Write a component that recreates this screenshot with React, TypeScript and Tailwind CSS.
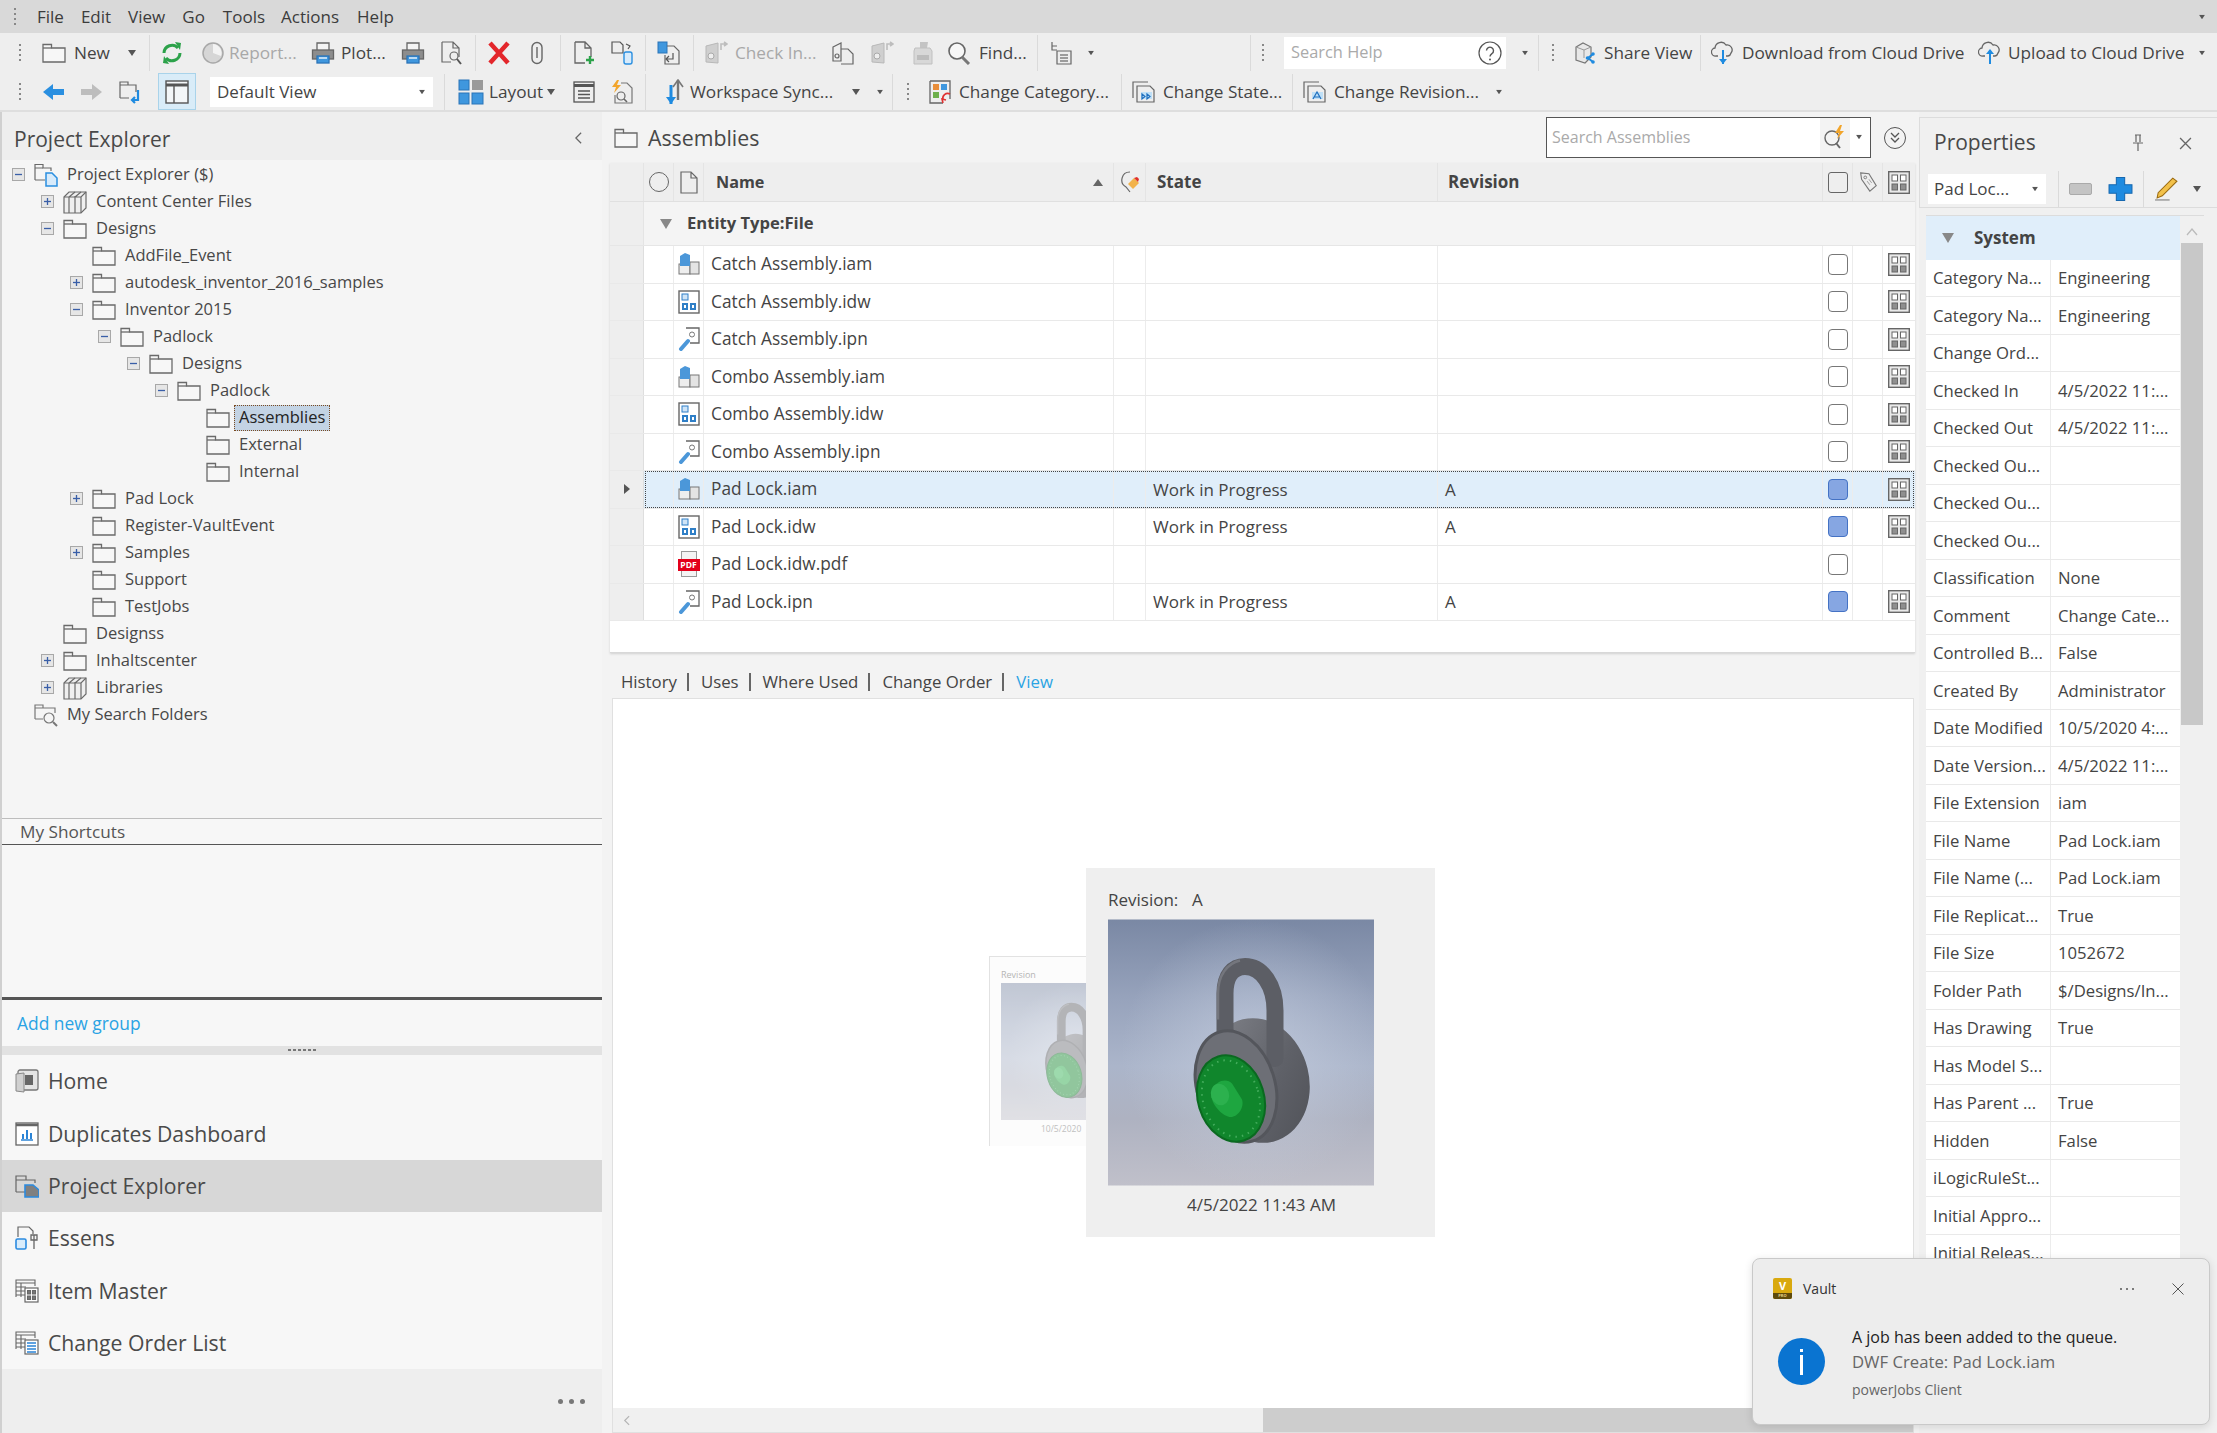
import React from "react";

const FONT = "font-['Open_Sans',sans-serif]";

type IconProps = { className?: string };

function Folder({ className = "w-6 h-[20px]" }: IconProps) {
  return (
    <svg viewBox="0 0 24 20" className={className} fill="none">
      <path d="M1 19V1.5h8.5V5H23v14z" stroke="#6a6a6a" strokeWidth="1.3" fill="#f7f7f7" />
      <path d="M1 5h8.5" stroke="#6a6a6a" strokeWidth="1.3" />
    </svg>
  );
}

function ProjectIcon({ className = "w-6 h-6" }: IconProps) {
  return (
    <svg viewBox="0 0 24 24" className={className} fill="none">
      <path d="M1 17V1.5h8V5h8v3" stroke="#6a6a6a" strokeWidth="1.2" />
      <path d="M1 5h8M1 17h10" stroke="#6a6a6a" strokeWidth="1.2" />
      <path d="M12 10h6l5 5v8H12z" fill="#d8ebfb" stroke="#2a8fe0" strokeWidth="1.5" />
    </svg>
  );
}

function LibraryIcon({ className = "w-6 h-6" }: IconProps) {
  return (
    <svg viewBox="0 0 24 24" className={className} fill="none" stroke="#6a6a6a" strokeWidth="1.2">
      <path d="M1 7l5-5h17v16l-5 5H1z" fill="#efefef" />
      <path d="M6 7v16M12 6v17M18 7v16M1 7h17l5-5M18 2l-6 5M12 2L6 7" />
    </svg>
  );
}

function SearchFolder({ className = "w-6 h-6" }: IconProps) {
  return (
    <svg viewBox="0 0 24 24" className={className} fill="none" stroke="#777" strokeWidth="1.2">
      <path d="M1 16V2h8v3h12v5M1 5h8M1 16h8" />
      <circle cx="15" cy="15" r="5" />
      <path d="M19 19l4 4" strokeWidth="2" />
    </svg>
  );
}

function Expander({ open }: { open: boolean }) {
  return (
    <span className="flex h-[13px] w-[13px] items-center justify-center border border-[#a8a8a8] bg-[#e6e6e6]">
      <svg viewBox="0 0 11 11" className="h-[11px] w-[11px]">
        <path d="M2 5.5h7" stroke="#3a5fa8" strokeWidth="1.3" />
        {!open && <path d="M5.5 2v7" stroke="#3a5fa8" strokeWidth="1.3" />}
      </svg>
    </span>
  );
}

function Caret({ className = "" }: IconProps) {
  return (
    <svg viewBox="0 0 8 6" className={`h-[6px] w-[8px] shrink-0 ${className}`}>
      <path d="M0 0h8L4 6z" fill="#555" />
    </svg>
  );
}

function Grip({ className = "" }: IconProps) {
  return (
    <span className={`flex h-[22px] w-[2px] shrink-0 flex-col justify-between py-[2px] ${className}`}>
      <i className="h-[2px] w-[2px] bg-[#888]" />
      <i className="h-[2px] w-[2px] bg-[#888]" />
      <i className="h-[2px] w-[2px] bg-[#888]" />
      <i className="h-[2px] w-[2px] bg-[#888]" />
    </span>
  );
}

function Sep({ className = "" }: IconProps) {
  return <span className={`h-[36px] w-px shrink-0 bg-[#dadada] ${className}`} />;
}

function Label({ children, className = "" }: { children: React.ReactNode; className?: string }) {
  return <span className={`shrink-0 whitespace-nowrap text-[17.2px] leading-none text-[#444] ${className}`}>{children}</span>;
}

const ico = "h-6 w-6 shrink-0";

function NewFolderIcon({ className = "" }: IconProps) {
  return <Folder className={`h-[22px] w-6 shrink-0 ${className}`} />;
}

function Refresh({ className = "" }: IconProps) {
  return (
    <svg viewBox="0 0 24 24" className={`${ico} ${className}`} fill="none">
      <path d="M4 12a8 8 0 0 1 14-5" stroke="#2ca24a" strokeWidth="3" />
      <path d="M15 1l6 1-1 7z" fill="#2ca24a" />
      <path d="M20 12a8 8 0 0 1-14 5" stroke="#2ca24a" strokeWidth="3" />
      <path d="M9 23l-6-1 1-7z" fill="#2ca24a" />
    </svg>
  );
}

function Clock({ className = "" }: IconProps) {
  return (
    <svg viewBox="0 0 24 24" className={`${ico} ${className}`} fill="none">
      <circle cx="12" cy="12" r="10" fill="#d6d6d6" stroke="#a8a8a8" strokeWidth="1.5" />
      <path d="M12 12V3a9 9 0 0 1 8 12z" fill="#f3f3f3" />
    </svg>
  );
}

function Printer({ className = "" }: IconProps) {
  return (
    <svg viewBox="0 0 24 24" className={`${ico} ${className}`} fill="none" stroke="#666" strokeWidth="1.3">
      <path d="M6 9V2h12v7" fill="#f4f4f4" />
      <rect x="1.5" y="9" width="21" height="9" fill="#8d8d8d" />
      <rect x="6" y="15" width="12" height="7" fill="#3f97de" stroke="#2b74b8" />
      <path d="M8 17h8" stroke="#fff" />
    </svg>
  );
}

function Preview({ className = "" }: IconProps) {
  return (
    <svg viewBox="0 0 24 24" className={`${ico} ${className}`} fill="none" stroke="#666" strokeWidth="1.2">
      <path d="M3 1h11l6 6v9M3 1v20h9M14 1v6h6" />
      <circle cx="15" cy="15" r="4" />
      <path d="M18 18l4 5" strokeWidth="2" stroke="#555" />
    </svg>
  );
}

function RedX({ className = "" }: IconProps) {
  return (
    <svg viewBox="0 0 24 24" className={`${ico} ${className}`} fill="none">
      <path d="M3 2l18 20M21 2L3 22" stroke="#e3262b" strokeWidth="4.5" />
    </svg>
  );
}

function Clip({ className = "" }: IconProps) {
  return (
    <svg viewBox="0 0 24 24" className={`${ico} ${className}`} fill="none" stroke="#666" strokeWidth="1.4">
      <rect x="7" y="1.5" width="10" height="21" rx="5" />
      <path d="M12 6v11" />
    </svg>
  );
}

function NewDoc({ className = "" }: IconProps) {
  return (
    <svg viewBox="0 0 24 24" className={`${ico} ${className}`} fill="none">
      <path d="M3 1h10l6 6v9M3 1v21h10M13 1v6h6" stroke="#666" strokeWidth="1.3" />
      <path d="M18 15v8M14 19h8" stroke="#2ca24a" strokeWidth="2.4" />
    </svg>
  );
}

function DocCyl({ className = "" }: IconProps) {
  return (
    <svg viewBox="0 0 24 24" className={`${ico} ${className}`} fill="none">
      <path d="M2 1h8l3 3v8H2z" stroke="#555" strokeWidth="1.2" />
      <path d="M16 3l4 2-2 3" stroke="#555" strokeWidth="1.2" />
      <rect x="14" y="11" width="8" height="12" rx="2" fill="#d8ebfb" stroke="#2a8fe0" strokeWidth="1.4" />
    </svg>
  );
}

function DocIn({ className = "" }: IconProps) {
  return (
    <svg viewBox="0 0 24 24" className={`${ico} ${className}`} fill="none">
      <rect x="1" y="1" width="9" height="11" fill="#3f97de" stroke="#2b74b8" />
      <path d="M10 5h7l5 5v13H8v-9" stroke="#666" strokeWidth="1.2" />
      <path d="M16 12v6h-6M12 15l-3 3 3 3" stroke="#555" strokeWidth="1.2" />
    </svg>
  );
}

function CheckInIcon({ className = "" }: IconProps) {
  return (
    <svg viewBox="0 0 24 24" className={`${ico} ${className}`} fill="none">
      <path d="M2 5l12-3v20l-12-1z" fill="#cfcfcf" stroke="#b8b8b8" />
      <circle cx="7" cy="15" r="3" fill="#eee" stroke="#aaa" />
      <path d="M17 9V3l6 0M20 1l3 2-3 2" stroke="#bdbdbd" strokeWidth="1.6" />
    </svg>
  );
}

function DocCopy({ className = "" }: IconProps) {
  return (
    <svg viewBox="0 0 24 24" className={`${ico} ${className}`} fill="none" stroke="#666" strokeWidth="1.2">
      <path d="M2 6l8-4v18H2z" />
      <circle cx="6" cy="15" r="2" />
      <path d="M10 8h7l5 5v10H10" />
    </svg>
  );
}

function PdfGray({ className = "" }: IconProps) {
  return (
    <svg viewBox="0 0 24 24" className={`${ico} ${className}`} fill="none">
      <path d="M10 1h8l-1 6h-7z" fill="#c4c4c4" />
      <path d="M5 7h15l2 3v13H4V10z" fill="#d8d8d8" stroke="#c0c0c0" />
      <rect x="7" y="14" width="12" height="5" fill="#bdbdbd" />
    </svg>
  );
}

function Find({ className = "" }: IconProps) {
  return (
    <svg viewBox="0 0 24 24" className={`${ico} ${className}`} fill="none" stroke="#666">
      <circle cx="10" cy="10" r="8" strokeWidth="1.6" fill="#f7f7f7" />
      <path d="M15 16l7 7" strokeWidth="3" stroke="#777" />
    </svg>
  );
}

function TreeList({ className = "" }: IconProps) {
  return (
    <svg viewBox="0 0 24 24" className={`${ico} ${className}`} fill="none" stroke="#666" strokeWidth="1.2">
      <path d="M3 1v8h5M3 5h5" />
      <path d="M8 10h14v13H8z" />
      <path d="M11 14h8M11 17h8M11 20h8" stroke="#4a4a4a" />
    </svg>
  );
}

function CloudIcon({ down, className = "" }: { down: boolean; className?: string }) {
  return (
    <svg viewBox="0 0 24 24" className={`${ico} ${className}`} fill="none">
      <path d="M7 15H5a4 4 0 0 1-1-8 6 6 0 0 1 11-3 5 5 0 0 1 5 8 4 4 0 0 1-3 3h-2" stroke="#666" strokeWidth="1.3" />
      <path d="M12 9v14" stroke="#1f8be0" strokeWidth="2" />
      {down ? <path d="M8 18l4 5 4-5z" fill="#1f8be0" /> : <path d="M8 13l4-5 4 5z" fill="#1f8be0" />}
    </svg>
  );
}

function ShareIcon({ className = "" }: IconProps) {
  return (
    <svg viewBox="0 0 24 24" className={`${ico} ${className}`} fill="none">
      <path d="M4 6l7-4 8 4v10l-6 6-9-3z" fill="#e8e8e8" stroke="#777" strokeWidth="1.2" />
      <path d="M4 6l8 3 7-3M12 9v8" stroke="#999" />
      <path d="M21 13l-5 4 5 4" stroke="#1f8be0" strokeWidth="2" />
      <circle cx="21" cy="13" r="1.8" fill="#1f8be0" />
      <circle cx="21" cy="21" r="1.8" fill="#1f8be0" />
      <circle cx="15.5" cy="17" r="1.8" fill="#1f8be0" />
    </svg>
  );
}

function Arrow({ left, color, className = "" }: { left: boolean; color: string; className?: string }) {
  return (
    <svg viewBox="0 0 24 24" className={`${ico} ${className}`}>
      <path d={left ? "M1 12l10-8v5h11v6H11v5z" : "M23 12L13 4v5H2v6h11v5z"} fill={color} />
    </svg>
  );
}

function DocArrow({ className = "" }: IconProps) {
  return (
    <svg viewBox="0 0 24 24" className={`${ico} ${className}`} fill="none">
      <path d="M2 18V2h8v3h8v7M2 5h8M2 18h9" stroke="#666" strokeWidth="1.2" />
      <path d="M20 10v10h-6M17 17l-3 3 3 3" stroke="#1f8be0" strokeWidth="2.2" />
    </svg>
  );
}

function PaneToggle() {
  return (
    <span className="ml-[16px] flex h-[37px] w-[38px] shrink-0 items-center justify-center border border-[#a9d3ea] bg-[#d9ecf8]">
      <svg viewBox="0 0 24 24" className="h-[26px] w-[24px]" fill="none" stroke="#555" strokeWidth="1.4">
        <rect x="1" y="1" width="22" height="22" fill="#f3f6f8" />
        <path d="M1 5h22" strokeWidth="3" />
        <path d="M9 5v18" />
      </svg>
    </span>
  );
}

function LayoutIcon({ className = "" }: IconProps) {
  return (
    <svg viewBox="0 0 26 26" className={`h-[26px] w-[26px] shrink-0 ${className}`} fill="#3f97de">
      <rect x="1" y="1" width="10" height="10" stroke="#2b74b8" />
      <rect x="14" y="1" width="11" height="10" fill="#9a9a9a" />
      <rect x="1" y="14" width="10" height="11" stroke="#2b74b8" />
      <rect x="14" y="14" width="11" height="11" stroke="#2b74b8" />
    </svg>
  );
}

function ListBox({ className = "" }: IconProps) {
  return (
    <svg viewBox="0 0 24 24" className={`${ico} ${className}`} fill="none" stroke="#555" strokeWidth="1.3">
      <rect x="2" y="2" width="20" height="20" />
      <path d="M2 5.5h20" strokeWidth="3" />
      <path d="M6 11h12M6 14.5h12M6 18h12" />
    </svg>
  );
}

function BoltDoc({ className = "" }: IconProps) {
  return (
    <svg viewBox="0 0 24 24" className={`${ico} ${className}`} fill="none">
      <path d="M11 3h6l5 5v15H5v-8" stroke="#777" strokeWidth="1.2" />
      <circle cx="11" cy="16" r="4" stroke="#666" strokeWidth="1.2" />
      <path d="M14 19l3 3" stroke="#666" strokeWidth="1.6" />
      <path d="M7 0L2 7h4l-2 6 7-8H7l2-5z" fill="#f2a52b" />
    </svg>
  );
}

function WsSync({ className = "" }: IconProps) {
  return (
    <svg viewBox="0 0 22 26" className={`h-[26px] w-[22px] shrink-0 ${className}`} fill="none">
      <path d="M8 6v19" stroke="#1f8be0" strokeWidth="3" />
      <path d="M3 18l5 7 5-7z" fill="#1f8be0" />
      <path d="M15 1v20" stroke="#777" strokeWidth="2.4" />
      <path d="M10 8l5-7 5 7" stroke="#777" strokeWidth="1.6" />
    </svg>
  );
}

function CatIcon({ className = "" }: IconProps) {
  return (
    <svg viewBox="0 0 24 24" className={`${ico} ${className}`} fill="none">
      <path d="M2 1h20v18M2 1v22h13" stroke="#666" strokeWidth="1.3" />
      <rect x="5" y="4" width="6" height="6" fill="#e88d3a" />
      <rect x="13" y="4" width="6" height="6" fill="#3f97de" />
      <rect x="5" y="12" width="6" height="6" fill="#6eb04c" />
      <path d="M22 14a5 5 0 0 0-7 6M15 23l-1-4 4 1" stroke="#e03030" strokeWidth="1.6" />
    </svg>
  );
}

function StateChange({ letter, className = "" }: { letter: string; className?: string }) {
  return (
    <svg viewBox="0 0 24 24" className={`${ico} ${className}`} fill="none">
      <path d="M1 18V2h15M5 22V6h13l4 4v12z" stroke="#666" strokeWidth="1.2" />
      <rect x="9" y="12" width="11" height="7" fill="#bfe0f7" />
      <path d={letter === "A" ? "M10 19l4-7 4 7M11.5 17h5" : "M10 14l3 2.5L10 19zM15 14l3 2.5-3 2.5z"} stroke="#1f6fbe" strokeWidth="1.2" />
    </svg>
  );
}

function AssemblyIcon() {
  return (
    <svg viewBox="0 0 22 22" className="h-[22px] w-[22px] shrink-0">
      <rect x="1" y="11" width="11" height="10" fill="#eee" stroke="#777" />
      <rect x="12" y="9" width="9" height="12" fill="#e4e4e4" stroke="#777" />
      <path d="M2 13V3l5-3 5 2v11z" fill="#4b97d9" />
    </svg>
  );
}

function DrawingIcon() {
  return (
    <svg viewBox="0 0 22 24" className="h-[24px] w-[22px] shrink-0">
      <rect x="1" y="1" width="20" height="22" fill="#fff" stroke="#666" strokeWidth="1.4" />
      <rect x="4" y="4" width="6" height="6" fill="#cfe4f7" stroke="#2f7fc7" />
      <rect x="4" y="13" width="6" height="7" fill="#2f7fc7" />
      <rect x="12" y="13" width="6" height="7" fill="#2f7fc7" />
      <path d="M6 15h2v3H6zM14 15h2v3h-2z" fill="#fff" />
    </svg>
  );
}

function PresentationIcon() {
  return (
    <svg viewBox="0 0 22 24" className="h-[24px] w-[22px] shrink-0" fill="none">
      <path d="M8 1h13v15H12" stroke="#666" strokeWidth="1.3" fill="#fff" />
      <circle cx="14" cy="7.5" r="2.5" stroke="#777" />
      <path d="M10 14L3 22" stroke="#4b97d9" strokeWidth="4" strokeLinecap="round" />
    </svg>
  );
}

function PdfIcon() {
  return (
    <span className="relative flex h-[26px] w-[22px] shrink-0 justify-center">
      <span className="h-[26px] w-[16px] border border-[#999] bg-[#f4f4f4]" />
      <span className="absolute top-[8px] left-0 h-[12px] w-[22px] bg-[#e3001b] text-center text-[8.5px] leading-[12px] font-bold text-white">PDF</span>
    </span>
  );
}

function GridIcon() {
  return (
    <svg viewBox="0 0 22 23" className="h-[23px] w-[22px]" fill="none">
      <rect x=".7" y=".7" width="20.6" height="21.6" fill="#e9e9e9" stroke="#666" strokeWidth="1.4" />
      <rect x="4" y="4" width="5.5" height="6" fill="#fff" stroke="#666" />
      <rect x="12.5" y="4" width="5.5" height="6" fill="#fff" stroke="#666" />
      <rect x="4" y="13" width="5.5" height="6" fill="#8f8f8f" stroke="#666" />
      <rect x="12.5" y="13" width="5.5" height="6" fill="#8f8f8f" stroke="#666" />
    </svg>
  );
}

function Padlock() {
  return (
    <svg viewBox="0 0 266 266" className="block h-full w-full">
      <defs>
        <linearGradient id="lockBg" x1="0" y1="0" x2="0" y2="1">
          <stop offset="0" stopColor="#7a88a4" />
          <stop offset=".3" stopColor="#97a3bc" />
          <stop offset=".55" stopColor="#abb5ca" />
          <stop offset=".75" stopColor="#aeb2c1" />
          <stop offset="1" stopColor="#c0c0ca" />
        </linearGradient>
        <radialGradient id="lockGlow" cx=".55" cy=".5" r=".5">
          <stop offset="0" stopColor="#c6cfe0" stopOpacity=".7" />
          <stop offset="1" stopColor="#c6cfe0" stopOpacity="0" />
        </radialGradient>
        <linearGradient id="lockBody" x1="0" y1="0" x2="1" y2="1">
          <stop offset="0" stopColor="#85878e" />
          <stop offset=".6" stopColor="#5f6168" />
          <stop offset="1" stopColor="#4f5157" />
        </linearGradient>
      </defs>
      <rect width="266" height="266" fill="url(#lockBg)" />
      <rect width="266" height="266" fill="url(#lockGlow)" />
      <ellipse cx="150" cy="161" rx="51" ry="63" transform="rotate(-14 150 161)" fill="url(#lockBody)" />
      <path d="M117 112V74c0-18 8-27 20-27 17 0 30 19 30 44v48" fill="none" stroke="#5c5e65" strokeWidth="17" strokeLinecap="round" />
      <path d="M110 100V74c0-18 9-30 22-33" fill="none" stroke="#74767d" strokeWidth="2.5" />
      <ellipse cx="128" cy="167" rx="39" ry="57" transform="rotate(-17 128 167)" fill="#6d6f76" stroke="#54565c" strokeWidth="3" />
      <ellipse cx="123" cy="179" rx="33" ry="44" transform="rotate(-17 123 179)" fill="#10862c" stroke="#0a6a20" strokeWidth="2" />
      <ellipse cx="123" cy="179" rx="28" ry="39" transform="rotate(-17 123 179)" fill="none" stroke="#5fc077" strokeOpacity=".65" strokeWidth="2" strokeDasharray="1.5 5" />
      <path d="M104 170c4-9 15-12 20-6l10 16c3 9-6 20-14 17-9-3-20-17-16-27z" fill="#1ea640" />
      <ellipse cx="112" cy="175" rx="9" ry="11" transform="rotate(-17 112 175)" fill="#2cb14e" />
    </svg>
  );
}

const indent: Record<number, string> = {
  0: "pl-[10px]",
  1: "pl-[39px]",
  2: "pl-[68px]",
  3: "pl-[96px]",
  4: "pl-[125px]",
  5: "pl-[153px]",
  6: "pl-[182px]",
};

type TreeNode = { d: number; t: string; e?: "open" | "closed"; i?: "project" | "lib" | "search"; sel?: boolean };

const tree: TreeNode[] = [
  { d: 0, t: "Project Explorer ($)", e: "open", i: "project" },
  { d: 1, t: "Content Center Files", e: "closed", i: "lib" },
  { d: 1, t: "Designs", e: "open" },
  { d: 2, t: "AddFile_Event" },
  { d: 2, t: "autodesk_inventor_2016_samples", e: "closed" },
  { d: 2, t: "Inventor 2015", e: "open" },
  { d: 3, t: "Padlock", e: "open" },
  { d: 4, t: "Designs", e: "open" },
  { d: 5, t: "Padlock", e: "open" },
  { d: 6, t: "Assemblies", sel: true },
  { d: 6, t: "External" },
  { d: 6, t: "Internal" },
  { d: 2, t: "Pad Lock", e: "closed" },
  { d: 2, t: "Register-VaultEvent" },
  { d: 2, t: "Samples", e: "closed" },
  { d: 2, t: "Support" },
  { d: 2, t: "TestJobs" },
  { d: 1, t: "Designss" },
  { d: 1, t: "Inhaltscenter", e: "closed" },
  { d: 1, t: "Libraries", e: "closed", i: "lib" },
  { d: 0, t: "My Search Folders", i: "search" },
];

function TreeRow({ node }: { node: TreeNode }) {
  return (
    <div className={`flex h-[27px] items-center ${indent[node.d]}`}>
      <span className="flex w-[13px] shrink-0 justify-center">
        {node.e && <Expander open={node.e === "open"} />}
      </span>
      <span className="ml-[9px] flex w-6 shrink-0 justify-center">
        {node.i === "project" ? <ProjectIcon /> : node.i === "lib" ? <LibraryIcon /> : node.i === "search" ? <SearchFolder /> : <Folder />}
      </span>
      {node.sel ? (
        <span className="ml-[4px] flex h-[26px] items-center border border-dotted border-[#7a4a20] bg-[#c3d3e4] px-[4px] text-[16.5px] text-[#222]">{node.t}</span>
      ) : (
        <span className="ml-[9px] whitespace-nowrap text-[16.5px] text-[#484848]">{node.t}</span>
      )}
    </div>
  );
}

function HomeIcon() {
  return (
    <svg viewBox="0 0 24 24" className={ico} fill="none">
      <rect x="3" y="1" width="20" height="20" rx="2" fill="#e4e4e4" stroke="#777" strokeWidth="1.3" />
      <path d="M1 5l8-1v19l-8-1z" fill="#d0d0d0" stroke="#888" />
      <rect x="10" y="6" width="8" height="10" fill="#666" />
    </svg>
  );
}

function DashIcon() {
  return (
    <svg viewBox="0 0 24 24" className={ico} fill="none">
      <rect x="1" y="1" width="22" height="22" stroke="#666" strokeWidth="1.3" fill="#fff" />
      <path d="M1 3h22" stroke="#666" strokeWidth="2.5" />
      <path d="M6 18h12" stroke="#2b84d6" strokeWidth="1.5" />
      <path d="M7 12v5h2v-5zM11 8v9h2V8zM15 11v6h2v-6z" fill="#2b84d6" />
    </svg>
  );
}

function NavProject() {
  return (
    <svg viewBox="0 0 24 24" className={ico} fill="none">
      <path d="M1 18V2h10v4h9v3M1 6h10M1 18h9" stroke="#666" strokeWidth="1.2" />
      <path d="M10 11h8l6 5v7H10z" fill="#808080" stroke="#2b8be0" strokeWidth="1.6" />
    </svg>
  );
}

function NavEssens() {
  return (
    <svg viewBox="0 0 24 24" className={ico} fill="none">
      <path d="M3 11V1h11l4 4v3" stroke="#666" strokeWidth="1.2" />
      <rect x="1" y="13" width="10" height="10" rx="1.5" fill="#d9ecfb" stroke="#2b8be0" strokeWidth="1.6" />
      <path d="M19 9v14M16 9h6v5h-6z" stroke="#666" strokeWidth="1.3" />
    </svg>
  );
}

function NavGrid({ blue }: { blue: boolean }) {
  return (
    <svg viewBox="0 0 24 24" className={ico} fill="none" stroke="#666" strokeWidth="1.1">
      <path d="M1 18V1h19v6M1 4h19M1 8h10M1 12h9M1 16h9M6 4v14" />
      <rect x="10" y="9" width="13" height="14" fill="#fff" strokeWidth="1.2" />
      {blue ? (
        <path d="M12 12h9M12 15h9M12 18h9M12 21h9" stroke="#2b84d6" strokeWidth="1.5" />
      ) : (
        <path d="M12.5 11.5h3V15h-3zM17.5 11.5h3V15h-3zM12.5 17h3v3.5h-3zM17.5 17h3v3.5h-3z" fill="#777" />
      )}
    </svg>
  );
}

function NavItem({ icon, label, active }: { icon: React.ReactNode; label: string; active?: boolean }) {
  return (
    <div className={`flex h-[52.4px] items-center pl-[13px] ${active ? "bg-[#d7d7d7]" : ""}`}>
      {icon}
      <span className="ml-[9px] text-[21.2px] text-[#4a4a4a]">{label}</span>
    </div>
  );
}

function LeftPanel() {
  return (
    <div className="flex h-full w-[602px] shrink-0 flex-col border-l-2 border-[#d0d0d0] bg-[#f7f7f7]">
      <div className="flex h-[48px] shrink-0 items-center justify-between bg-[#eeeeee] pt-[7px] pr-[19px] pl-[12px]">
        <span className="text-[21px] text-[#484848]">Project Explorer</span>
        <svg viewBox="0 0 10 16" className="mb-[4px] h-[14px] w-[9px]" fill="none">
          <path d="M8 2L2 8l6 6" stroke="#666" strokeWidth="1.4" />
        </svg>
      </div>
      <div className="h-[658px] shrink-0 overflow-hidden bg-[#f5f5f5] pt-[1px]">
        {tree.map((n, i) => (
          <TreeRow key={i} node={n} />
        ))}
      </div>
      <div className="flex h-[27px] shrink-0 items-center border-t border-b border-t-[#bdbdbd] border-b-[#555] pl-[18px] text-[17.2px] text-[#555]">My Shortcuts</div>
      <div className="h-[152px] shrink-0" />
      <div className="h-[3px] shrink-0 bg-[#555]" />
      <div className="flex h-[45.5px] shrink-0 items-center pl-[15px] text-[17.4px] text-[#2aa3e4]">Add new group</div>
      <div className="flex h-[9.5px] shrink-0 items-center justify-center gap-[2px] bg-[#e2e2e2]">
        <i className="h-[2px] w-[3px] bg-[#777]" />
        <i className="h-[2px] w-[3px] bg-[#777]" />
        <i className="h-[2px] w-[3px] bg-[#777]" />
        <i className="h-[2px] w-[3px] bg-[#777]" />
        <i className="h-[2px] w-[3px] bg-[#777]" />
        <i className="h-[2px] w-[3px] bg-[#777]" />
      </div>
      <NavItem icon={<HomeIcon />} label="Home" />
      <NavItem icon={<DashIcon />} label="Duplicates Dashboard" />
      <NavItem icon={<NavProject />} label="Project Explorer" active />
      <NavItem icon={<NavEssens />} label="Essens" />
      <NavItem icon={<NavGrid blue={false} />} label="Item Master" />
      <NavItem icon={<NavGrid blue />} label="Change Order List" />
      <div className="flex flex-1 items-center justify-end gap-[6px] bg-[#eeeeee] pr-[17px]">
        <i className="h-[5px] w-[5px] rounded-full bg-[#777]" />
        <i className="h-[5px] w-[5px] rounded-full bg-[#777]" />
        <i className="h-[5px] w-[5px] rounded-full bg-[#777]" />
      </div>
    </div>
  );
}

const gridCols = "grid-cols-[34px_30px_30px_410px_32px_292px_385px_30px_30px_32px]";
const cell = "flex h-full items-center border-r border-[#ececec]";

type FileRow = { name: string; kind: "iam" | "idw" | "ipn" | "pdf"; wip?: boolean; sel?: boolean };

const files: FileRow[] = [
  { name: "Catch Assembly.iam", kind: "iam" },
  { name: "Catch Assembly.idw", kind: "idw" },
  { name: "Catch Assembly.ipn", kind: "ipn" },
  { name: "Combo Assembly.iam", kind: "iam" },
  { name: "Combo Assembly.idw", kind: "idw" },
  { name: "Combo Assembly.ipn", kind: "ipn" },
  { name: "Pad Lock.iam", kind: "iam", wip: true, sel: true },
  { name: "Pad Lock.idw", kind: "idw", wip: true },
  { name: "Pad Lock.idw.pdf", kind: "pdf" },
  { name: "Pad Lock.ipn", kind: "ipn", wip: true },
];

function FileIcon({ kind }: { kind: FileRow["kind"] }) {
  if (kind === "iam") return <AssemblyIcon />;
  if (kind === "idw") return <DrawingIcon />;
  if (kind === "ipn") return <PresentationIcon />;
  return <PdfIcon />;
}

function FileRowView({ row }: { row: FileRow }) {
  const bg = row.sel ? "bg-[#e0eefa]" : "bg-white";
  return (
    <div className={`relative grid h-[37.5px] ${gridCols} border-b border-[#e9e9e9] text-[17px] text-[#444]`}>
      <div className="flex h-full items-center justify-center border-r border-[#dedede] bg-[#eeeeee]">
        {row.sel && (
          <svg viewBox="0 0 6 10" className="h-[10px] w-[6px]">
            <path d="M0 0l6 5-6 5z" fill="#555" />
          </svg>
        )}
      </div>
      <div className={`${cell} ${bg}`} />
      <div className={`${cell} ${bg} justify-center`}>
        <FileIcon kind={row.kind} />
      </div>
      <div className={`${cell} ${bg} pl-[7px] text-[17.3px]`}>{row.name}</div>
      <div className={`${cell} ${bg}`} />
      <div className={`${cell} ${bg} pl-[7px]`}>{row.wip ? "Work in Progress" : ""}</div>
      <div className={`${cell} ${bg} pl-[7px]`}>{row.wip ? "A" : ""}</div>
      <div className={`${cell} ${bg} justify-center`}>
        <span className={`h-[21px] w-[20px] rounded-[4px] border ${row.wip ? "border-[#4472c4] bg-[#86a6e2]" : "border-[#777] bg-white"}`} />
      </div>
      <div className={`${cell} ${bg}`} />
      <div className={`${cell} ${bg} justify-center border-r-0`}>{row.kind !== "pdf" && <GridIcon />}</div>
      {row.sel && <span className="pointer-events-none absolute inset-y-0 right-[1px] left-[35px] border border-dotted border-[#444]" />}
    </div>
  );
}

function FileGrid() {
  return (
    <div className="ml-[8px] flex h-[490px] w-[1305px] shrink-0 flex-col border-b border-[#d8d8d8] bg-white shadow-[0_1px_2px_#d0d0d0]">
      <div className={`grid h-[39px] shrink-0 ${gridCols} border-b border-[#e0e0e0] bg-[#eeeeee] text-[17px] font-bold text-[#444]`}>
        <div className="h-full border-r border-[#e4e4e4]" />
        <div className="flex h-full items-center justify-center border-r border-[#e4e4e4]">
          <span className="h-[20px] w-[20px] rounded-full border border-[#666]" />
        </div>
        <div className="flex h-full items-center justify-center border-r border-[#e4e4e4]">
          <svg viewBox="0 0 18 23" className="h-[23px] w-[18px]" fill="none">
            <path d="M1 1h10l6 6v15H1zM11 1v6h6" stroke="#666" strokeWidth="1.2" />
          </svg>
        </div>
        <div className="flex h-full items-center justify-between border-r border-[#e4e4e4] pr-[10px] pl-[12px] text-[16.2px]">
          <span>Name</span>
          <svg viewBox="0 0 10 7" className="h-[7px] w-[10px]">
            <path d="M0 7l5-7 5 7z" fill="#666" />
          </svg>
        </div>
        <div className="flex h-full items-center justify-center border-r border-[#e4e4e4]">
          <svg viewBox="0 0 20 24" className="h-[24px] w-[20px]" fill="none">
            <path d="M10 2a8 8 0 0 0-4 15l4 5" stroke="#666" strokeWidth="1.2" />
            <path d="M8 14l6-6 5 5-6 6z" fill="#f2b24a" />
            <path d="M14 8l3-1 2 2-1 3z" fill="#e0302a" />
          </svg>
        </div>
        <div className="flex h-full items-center border-r border-[#e4e4e4] pl-[11px]">State</div>
        <div className="flex h-full items-center border-r border-[#e4e4e4] pl-[10px]">Revision</div>
        <div className="flex h-full items-center justify-center border-r border-[#e4e4e4]">
          <span className="h-[21px] w-[20px] rounded-[3px] border border-[#666]" />
        </div>
        <div className="flex h-full items-center justify-center border-r border-[#e4e4e4]">
          <svg viewBox="0 0 20 24" className="h-[22px] w-[20px]" fill="none">
            <path d="M2 2l9 1 8 13-7 6L3 9z" stroke="#777" strokeWidth="1.2" />
            <circle cx="7" cy="7" r="1.5" stroke="#777" />
            <path d="M9 11l3 4M11 9l3 4" stroke="#999" />
          </svg>
        </div>
        <div className="flex h-full items-center justify-center">
          <GridIcon />
        </div>
      </div>
      <div className="flex h-[44px] shrink-0 border-b border-[#e6e6e6] bg-[#f4f4f4]">
        <div className="w-[34px] border-r border-[#e4e4e4] bg-[#eeeeee]" />
        <div className="flex items-center pl-[16px] text-[16.6px] font-bold text-[#444]">
          <svg viewBox="0 0 12 10" className="mr-[15px] h-[10px] w-[12px]">
            <path d="M0 0h12L6 10z" fill="#888" />
          </svg>
          Entity Type:File
        </div>
      </div>
      {files.map((f) => (
        <FileRowView key={f.name} row={f} />
      ))}
    </div>
  );
}

function PreviewCards() {
  return (
    <div className="flex flex-1 items-start overflow-hidden pt-[169px] pl-[376px]">
      <div className="mt-[88px] flex h-[190px] w-[97px] shrink-0 flex-col overflow-hidden border-t border-l border-[#e2e2e2] bg-[#fcfcfc] pl-[11px]">
        <span className="mt-[9px] h-[17px] text-[9px] leading-[17px] text-[#b5b5b5]">Revision</span>
        <div className="h-[137px] w-[137px] shrink-0 opacity-45">
          <Padlock />
        </div>
        <span className="mt-[3px] pl-[40px] text-[8.5px] whitespace-nowrap text-[#c0c0c0]">10/5/2020</span>
      </div>
      <div className="flex h-[369px] w-[349px] shrink-0 flex-col bg-[#efefef] pl-[22px]">
        <div className="flex h-[51px] shrink-0 items-end pb-[11px] text-[17px] leading-none text-[#444]">
          <span className="w-[84px]">Revision:</span>
          <span>A</span>
        </div>
        <div className="h-[267px] w-[266px] shrink-0">
          <Padlock />
        </div>
        <div className="mt-[10px] pl-[79px] text-[17px] leading-none whitespace-nowrap text-[#444]">4/5/2022 11:43 AM</div>
      </div>
    </div>
  );
}

const tabs = ["History", "Uses", "Where Used", "Change Order"];

function MainPanel() {
  return (
    <div className="flex h-full w-[1317px] shrink-0 flex-col bg-[#f3f3f3]">
      <div className="flex h-[51px] shrink-0 items-center pl-[12px]">
        <Folder className="h-[22px] w-6" />
        <span className="ml-[10px] text-[21.3px] text-[#484848]">Assemblies</span>
        <div className="mt-[-1px] ml-auto flex h-[41px] w-[325px] items-center border border-[#555] bg-white pl-[5px]">
          <span className="text-[16px] text-[#aaa]">Search Assemblies</span>
          <span className="mr-[4px] ml-auto flex h-full w-[30px] items-center justify-center bg-[#f3f3f3]">
            <svg viewBox="0 0 24 24" className="h-[26px] w-[24px]" fill="none">
              <circle cx="9" cy="13" r="7" stroke="#666" strokeWidth="1.4" />
              <path d="M13 18l4 5" stroke="#666" strokeWidth="2" />
              <path d="M17 0l-5 8h4l-2 6 7-8h-4l2-6z" fill="#f2a52b" />
            </svg>
          </span>
          <Caret className="mr-[7px] ml-[1px] scale-75" />
        </div>
        <span className="mr-[13px] ml-[13px] flex h-[22px] w-[22px] items-center justify-center rounded-full border border-[#555]">
          <svg viewBox="0 0 12 12" className="h-[12px] w-[12px]" fill="none">
            <path d="M2 1l4 4 4-4M2 6l4 4 4-4" stroke="#555" strokeWidth="1.3" />
          </svg>
        </span>
      </div>
      <FileGrid />
      <div className="flex h-[45px] shrink-0 items-center pt-[13px] pl-[19px] text-[16.8px] text-[#444]">
        {tabs.map((t) => (
          <span key={t} className="mr-[12px] flex items-center">
            {t}
            <i className="ml-[10px] h-[18px] w-[2px] bg-[#666]" />
          </span>
        ))}
        <span className="text-[#2aa3e4]">View</span>
      </div>
      <div className="ml-[10px] flex min-h-0 w-[1302px] flex-1 flex-col border border-[#e0e0e0] bg-white">
        <PreviewCards />
        <div className="flex h-[24px] shrink-0 items-center bg-[#f0f0f0]">
          <svg viewBox="0 0 8 12" className="ml-[10px] h-[11px] w-[7px]" fill="none">
            <path d="M7 1L2 6l5 5" stroke="#b5b5b5" strokeWidth="1.4" />
          </svg>
          <div className="ml-[633px] h-full flex-1 bg-[#cdcdcd]" />
        </div>
      </div>
    </div>
  );
}

const props: [string, string][] = [
  ["Category Na...", "Engineering"],
  ["Category Na...", "Engineering"],
  ["Change Ord...", ""],
  ["Checked In", "4/5/2022 11:..."],
  ["Checked Out", "4/5/2022 11:..."],
  ["Checked Ou...", ""],
  ["Checked Ou...", ""],
  ["Checked Ou...", ""],
  ["Classification", "None"],
  ["Comment", "Change Cate..."],
  ["Controlled B...", "False"],
  ["Created By", "Administrator"],
  ["Date Modified", "10/5/2020 4:..."],
  ["Date Version...", "4/5/2022 11:..."],
  ["File Extension", "iam"],
  ["File Name", "Pad Lock.iam"],
  ["File Name (...", "Pad Lock.iam"],
  ["File Replicat...", "True"],
  ["File Size", "1052672"],
  ["Folder Path", "$/Designs/In..."],
  ["Has Drawing", "True"],
  ["Has Model S...", ""],
  ["Has Parent ...", "True"],
  ["Hidden", "False"],
  ["iLogicRuleSt...", ""],
  ["Initial Appro...", ""],
  ["Initial Releas...", ""],
];

function PropertiesPanel() {
  return (
    <div className="flex h-full flex-1 flex-col bg-[#f0f0f0] pt-[5px]">
      <div className="flex h-[53px] shrink-0 items-center border-t border-l border-[#dcdcdc] pb-[2px] pl-[14px]">
        <span className="text-[21px] text-[#484848]">Properties</span>
        <svg viewBox="0 0 12 18" className="ml-[96px] h-[18px] w-[12px]" fill="none">
          <path d="M3 1h6M4 1v7M8 1v7M1 9h10M6 9v8" stroke="#666" strokeWidth="1.2" />
        </svg>
        <svg viewBox="0 0 12 12" className="ml-[35px] h-[13px] w-[13px]" fill="none">
          <path d="M1 1l10 10M11 1L1 11" stroke="#666" strokeWidth="1.2" />
        </svg>
      </div>
      <div className="flex h-[38px] shrink-0 items-center border-b border-l border-[#dcdcdc] pl-[8px]">
        <div className="flex h-[30px] w-[118px] items-center bg-white pl-[6px]">
          <span className="text-[17px] text-[#444]">Pad Loc...</span>
          <Caret className="mr-[7px] ml-auto scale-75" />
        </div>
        <Sep className="ml-[12px] h-[30px]" />
        <span className="ml-[10px] h-[12px] w-[23px] rounded-[2px] border border-[#aaa] bg-[#c4c4c4]" />
        <svg viewBox="0 0 24 24" className="ml-[16px] h-[26px] w-[25px]">
          <path d="M8 1h8v7h7v8h-7v7H8v-7H1V8h7z" fill="#1f8be0" stroke="#1668b0" />
        </svg>
        <Sep className="ml-[10px] h-[30px]" />
        <svg viewBox="0 0 24 24" className="ml-[10px] h-[27px] w-[25px]" fill="none">
          <path d="M18 2l4 3L8 19l-5 2 1-5z" fill="#f2c14a" stroke="#9a6a10" />
          <path d="M1 23h14" stroke="#777" />
        </svg>
        <Caret className="ml-[14px]" />
      </div>
      <div className="mt-[7px] ml-[7px] flex min-h-0 w-[278px] flex-1 overflow-hidden border-t border-[#dcdcdc]">
        <div className="w-[254px] shrink-0">
          <div className="flex h-[43.5px] items-center bg-[#e0eefa] pl-[16px] text-[17px] font-bold text-[#444]">
            <svg viewBox="0 0 12 10" className="mr-[20px] h-[10px] w-[12px]">
              <path d="M0 0h12L6 10z" fill="#888" />
            </svg>
            System
          </div>
          {props.map(([k, v], i) => (
            <div key={i} className="flex h-[37.5px] border-b border-[#e9e9e9] bg-white text-[16.7px] text-[#444]">
              <div className="flex w-[125px] shrink-0 items-center overflow-hidden border-r border-[#ececec] pl-[7px] whitespace-nowrap">{k}</div>
              <div className="flex flex-1 items-center overflow-hidden pl-[7px] whitespace-nowrap">{v}</div>
            </div>
          ))}
        </div>
        <div className="flex-1 bg-[#f0f0f0] pt-[12px]">
          <svg viewBox="0 0 12 8" className="mx-auto h-[8px] w-[12px]" fill="none">
            <path d="M1 7l5-6 5 6" stroke="#bbb" strokeWidth="1.3" />
          </svg>
          <div className="mx-auto mt-[7px] h-[482px] w-[22px] bg-[#c8c8c8]" />
        </div>
      </div>
    </div>
  );
}

function Toast() {
  return (
    <div className="absolute top-[1258px] left-[1752px] h-[167px] w-[458px] rounded-[8px] border border-[#c9c9c9] bg-[#ededed] shadow-[0_2px_8px_rgba(0,0,0,0.12)]">
      <div className="mt-[19px] ml-[20px] flex items-center">
        <span className="flex h-[21px] w-[19px] flex-col overflow-hidden rounded-[2px] bg-[#d9a90f]">
          <span className="h-[15px] text-center text-[11px] leading-[15px] font-bold text-white">V</span>
          <span className="h-[6px] bg-[#5e4a0c] text-center text-[4px] leading-[6px] font-bold text-[#e8d48a]">PRO</span>
        </span>
        <span className="ml-[11px] text-[14px] text-[#333]">Vault</span>
        <span className="ml-[284px] flex gap-[4px]">
          <i className="h-[2px] w-[2px] rounded-full bg-[#555]" />
          <i className="h-[2px] w-[2px] rounded-full bg-[#555]" />
          <i className="h-[2px] w-[2px] rounded-full bg-[#555]" />
        </span>
        <svg viewBox="0 0 12 12" className="ml-[38px] h-[12px] w-[12px]" fill="none">
          <path d="M.5.5l11 11M11.5.5l-11 11" stroke="#555" />
        </svg>
      </div>
      <div className="mt-[26px] ml-[25px] flex">
        <span className="mt-[13px] flex h-[47px] w-[47px] shrink-0 flex-col items-center justify-center gap-[3px] rounded-full bg-[#0a74d1]">
          <i className="h-[3px] w-[3px] bg-white" />
          <i className="h-[20px] w-[3px] bg-white" />
        </span>
        <div className="ml-[27px] flex flex-col">
          <span className="text-[16px] leading-[24px] whitespace-nowrap text-[#222]">A job has been added to the queue.</span>
          <span className="mt-[2px] text-[16.7px] leading-[22px] text-[#666]">DWF Create: Pad Lock.iam</span>
          <span className="mt-[7px] text-[14px] leading-[20px] text-[#666]">powerJobs Client</span>
        </div>
      </div>
    </div>
  );
}

function ToolbarTop() {
  return (
    <div className="flex h-[39px] items-center">
      <Grip className="ml-[19px]" />
      <NewFolderIcon className="ml-[21px]" />
      <Label className="ml-[8px] w-[36px]">New</Label>
      <Caret className="ml-[18px]" />
      <Sep className="ml-[13px]" />
      <Refresh className="ml-[10px]" />
      <Clock className="ml-[17px]" />
      <Label className="ml-[4px] w-[66px] text-[#a8a8a8]">Report...</Label>
      <Printer className="ml-[16px]" />
      <Label className="ml-[6px] w-[45px]">Plot...</Label>
      <Printer className="ml-[15px]" />
      <Preview className="ml-[14px]" />
      <Sep className="ml-[12px]" />
      <RedX className="ml-[11px]" />
      <Clip className="ml-[14px]" />
      <Sep className="ml-[11px]" />
      <NewDoc className="ml-[11px]" />
      <DocCyl className="ml-[14px]" />
      <Sep className="ml-[11px]" />
      <DocIn className="ml-[11px]" />
      <Sep className="ml-[12px]" />
      <CheckInIcon className="ml-[10px]" />
      <Label className="ml-[7px] w-[81px] text-[#a8a8a8]">Check In...</Label>
      <DocCopy className="ml-[15px]" />
      <CheckInIcon className="ml-[15px]" />
      <PdfGray className="ml-[16px]" />
      <Find className="ml-[13px]" />
      <Label className="ml-[8px] w-[47px]">Find...</Label>
      <Sep className="ml-[11px]" />
      <TreeList className="ml-[11px]" />
      <Caret className="ml-[14px] scale-75" />
      <Sep className="ml-[155px]" />
      <Grip className="ml-[11px]" />
      <div className="ml-[20px] flex h-[32px] w-[222px] shrink-0 items-center bg-white pl-[7px]">
        <span className="text-[16.4px] text-[#aaa]">Search Help</span>
        <svg viewBox="0 0 24 24" className="mr-[4px] ml-auto h-[24px] w-[24px]" fill="none">
          <ellipse cx="12" cy="12" rx="11" ry="11" stroke="#555" strokeWidth="1.2" />
          <path d="M8.5 9.5a3.5 3.5 0 1 1 5.5 3c-1.3 1-2 1.5-2 3" stroke="#555" strokeWidth="1.4" />
          <circle cx="12" cy="18.5" r="1" fill="#555" />
        </svg>
      </div>
      <Caret className="ml-[15px] scale-75" />
      <Sep className="ml-[9px]" />
      <Grip className="ml-[13px]" />
      <ShareIcon className="ml-[18px]" />
      <Label className="ml-[8px] w-[86px]">Share View</Label>
      <Sep className="ml-[10px]" />
      <CloudIcon down className="ml-[10px]" />
      <Label className="ml-[7px] w-[222px]">Download from Cloud Drive</Label>
      <CloudIcon down={false} className="ml-[14px]" />
      <Label className="ml-[6px] w-[177px]">Upload to Cloud Drive</Label>
      <Caret className="ml-[13px] scale-75" />
    </div>
  );
}

function ToolbarBottom() {
  return (
    <div className="flex h-[39px] items-center">
      <Grip className="ml-[19px]" />
      <Arrow left color="#2a8fe0" className="ml-[21px]" />
      <Arrow left={false} color="#bdbdbd" className="ml-[13px]" />
      <DocArrow className="ml-[15px]" />
      <PaneToggle />
      <div className="ml-[14px] flex h-[30px] w-[223px] shrink-0 items-center bg-white pl-[7px]">
        <span className="text-[17px] text-[#444]">Default View</span>
        <Caret className="mr-[7px] ml-auto scale-75" />
      </div>
      <Sep className="ml-[11px]" />
      <LayoutIcon className="ml-[13px]" />
      <Label className="ml-[5px] w-[55px]">Layout</Label>
      <Caret className="ml-[3px]" />
      <ListBox className="ml-[17px]" />
      <BoltDoc className="ml-[14px]" />
      <Sep className="ml-[11px]" />
      <WsSync className="ml-[17px]" />
      <Label className="ml-[5px] w-[143px]">Workspace Sync...</Label>
      <Caret className="ml-[19px]" />
      <Caret className="ml-[16px] scale-75" />
      <Sep className="ml-[8px]" />
      <Grip className="ml-[14px]" />
      <CatIcon className="ml-[19px]" />
      <Label className="ml-[7px] w-[152px]">Change Category...</Label>
      <Sep className="ml-[10px]" />
      <StateChange letter="S" className="ml-[10px]" />
      <Label className="ml-[7px] w-[119px]">Change State...</Label>
      <Sep className="ml-[10px]" />
      <StateChange letter="A" className="ml-[10px]" />
      <Label className="ml-[7px] w-[146px]">Change Revision...</Label>
      <Caret className="ml-[15px] scale-75" />
    </div>
  );
}

const menus = [
  ["File", "ml-[21px]"],
  ["Edit", "ml-[17px]"],
  ["View", "ml-[17px]"],
  ["Go", "ml-[17px]"],
  ["Tools", "ml-[18px]"],
  ["Actions", "ml-[16px]"],
  ["Help", "ml-[18px]"],
];

export default function App() {
  return (
    <div className={`relative flex h-[1433px] w-[2217px] flex-col overflow-hidden bg-[#eeeeee] ${FONT}`}>
      <div className="flex h-[33px] shrink-0 items-center bg-[#d9d9d9]">
        <Grip className="ml-[14px]" />
        {menus.map(([m, c]) => (
          <span key={m} className={`text-[17px] text-[#3c3c3c] ${c}`}>
            {m}
          </span>
        ))}
        <Caret className="mr-[11px] ml-auto scale-75" />
      </div>
      <div className="h-[79px] shrink-0 border-b-2 border-[#dedede] bg-[#eeeeee]">
        <ToolbarTop />
        <ToolbarBottom />
      </div>
      <div className="flex min-h-0 flex-1">
        <LeftPanel />
        <MainPanel />
        <PropertiesPanel />
      </div>
      <Toast />
    </div>
  );
}
